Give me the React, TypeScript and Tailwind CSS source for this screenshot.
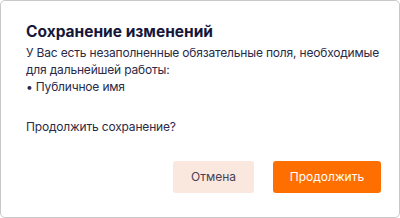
export default function App() {
  return (
    <div className="h-[218px] w-[400px] bg-white">
      <div
        className="flex h-full w-full flex-col rounded-[5px] border border-[#c9c9c9] bg-white pl-[25px] pr-[12px] pt-[20px] pb-[24px] text-[#2a2a48]"
        style={{ fontFamily: "Inter, 'Noto Sans', sans-serif" }}
      >
        <h2 className="text-[15.5px] font-bold leading-[22px] text-[#17173a]">
          Сохранение изменений
        </h2>
        <div className="mt-[1px] text-[12px] leading-[17px] tracking-[-0.18px]">
          <p className="whitespace-nowrap">
            У Вас есть незаполненные обязательные поля, необходимые
            <br />
            для дальнейшей работы:
          </p>
          <ul>
            <li>• Публичное имя</li>
          </ul>
          <p className="mt-[23px]">Продолжить сохранение?</p>
        </div>
        <div className="mt-auto flex justify-end gap-[19px] pr-[6px]">
          <button className="h-[32px] w-[81px] rounded-[3px] bg-[#fae8df] text-[12px] text-[#4b3f52]">
            Отмена
          </button>
          <button className="h-[32px] w-[108px] rounded-[3px] bg-[#ff6f00] text-[12px] text-white">
            Продолжить
          </button>
        </div>
      </div>
    </div>
  );
}
